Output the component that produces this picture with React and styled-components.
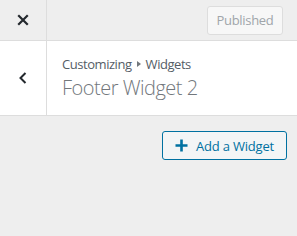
import React from "react";
import styled, { createGlobalStyle } from "styled-components";

const Global = createGlobalStyle`
  html, body { margin: 0; padding: 0; background: #eeeeee; }
  body { font-family: "Open Sans", "Noto Sans", sans-serif; }
`;

const Sidebar = styled.div`
  width: 297px;
  height: 236px;
  background: #eeeeee;
  display: flex;
  flex-direction: column;
`;

const Header = styled.div`
  height: 40px;
  display: flex;
  align-items: center;
  border-bottom: 1px solid #dddddd;
  background: #eeeeee;
`;

const CloseButton = styled.div`
  width: 47px;
  height: 40px;
  border-right: 1px solid #dddddd;
  display: flex;
  align-items: center;
  justify-content: center;
  box-sizing: border-box;
`;

const Spacer = styled.div`flex: 1;`;

const PublishedButton = styled.div`
  margin-right: 14px;
  width: 76px;
  height: 29px;
  box-sizing: border-box;
  border: 1px solid #dddddd;
  border-radius: 3px;
  background: #f7f7f7;
  color: #a0a5aa;
  font-size: 13px;
  letter-spacing: -0.3px;
  display: flex;
  align-items: center;
  justify-content: center;
`;

const Section = styled.div`
  height: 74px;
  background: #ffffff;
  border-bottom: 1px solid #dddddd;
  display: flex;
`;

const BackButton = styled.div`
  width: 47px;
  border-right: 1px solid #dddddd;
  box-sizing: border-box;
  display: flex;
  align-items: center;
  justify-content: center;
`;

const TitleBlock = styled.div`
  padding: 14px 0 0 15px;
  display: flex;
  flex-direction: column;
`;

const Crumb = styled.div`
  font-size: 13px;
  letter-spacing: -0.45px;
  color: #555d66;
  line-height: 18px;
  display: flex;
  align-items: center;
  gap: 5px;
`;

const Title = styled.div`
  margin-top: 2px;
  font-size: 20px;
  letter-spacing: -0.5px;
  font-weight: 300;
  color: #72777c;
  line-height: 26px;
`;

const Actions = styled.div`
  display: flex;
  justify-content: flex-end;
  padding: 15px 10px 0 0;
`;

const AddButton = styled.div`
  width: 125px;
  height: 29px;
  box-sizing: border-box;
  border: 1px solid #0071a1;
  border-radius: 3px;
  background: #f3f5f6;
  color: #0071a1;
  font-size: 13px;
  letter-spacing: -0.2px;
  display: flex;
  align-items: center;
  padding-left: 12px;
  gap: 8px;
`;

export default function App() {
  return (
    <>
      <Global />
      <Sidebar>
        <Header>
          <CloseButton>
            <svg width="12" height="12" viewBox="0 0 12 12">
              <path d="M2 2 L10 10 M10 2 L2 10" stroke="#23282d" strokeWidth="2.2" strokeLinecap="square" />
            </svg>
          </CloseButton>
          <Spacer />
          <PublishedButton>Published</PublishedButton>
        </Header>
        <Section>
          <BackButton>
            <svg width="10" height="14" viewBox="0 0 10 14">
              <path d="M7.5 2 L2.5 7 L7.5 12" fill="none" stroke="#23282d" strokeWidth="2" />
            </svg>
          </BackButton>
          <TitleBlock>
            <Crumb>
              <span>Customizing</span>
              <svg width="4" height="6" viewBox="0 0 4 6"><path d="M0 0 L4 3 L0 6 Z" fill="#72777c" /></svg>
              <span>Widgets</span>
            </Crumb>
            <Title>Footer Widget 2</Title>
          </TitleBlock>
        </Section>
        <Actions>
          <AddButton>
            <svg width="13" height="13" viewBox="0 0 13 13">
              <path d="M6.5 0.5 V12.5 M0.5 6.5 H12.5" stroke="#0071a1" strokeWidth="2.6" />
            </svg>
            <span>Add a Widget</span>
          </AddButton>
        </Actions>
      </Sidebar>
    </>
  );
}
